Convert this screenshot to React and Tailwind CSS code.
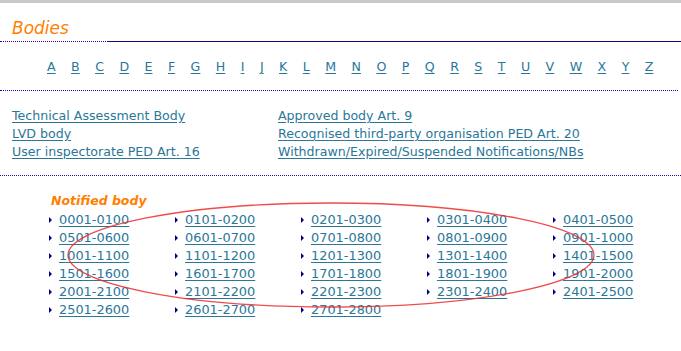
import React from "react";

const letters = "ABCDEFGHIJKLMNOPQRSTUVWXYZ".split("");

const bodyLinks = [
  "Technical Assessment Body",
  "Approved body Art. 9",
  "LVD body",
  "Recognised third-party organisation PED Art. 20",
  "User inspectorate PED Art. 16",
  "Withdrawn/Expired/Suspended Notifications/NBs",
];

const pad = (n) => String(n).padStart(4, "0");
const ranges = [];
for (let i = 0; i < 28; i++) {
  ranges.push(`${pad(i * 100 + 1)}-${pad(i * 100 + 100)}`);
}

const Dotted = ({ className = "" }) => (
  <div className={`border-t border-dotted border-[#2a00b0] ${className}`} />
);

export default function App() {
  return (
    <div className="relative w-[681px] h-[351px] overflow-hidden bg-white font-['DejaVu_Sans',Verdana,sans-serif] text-[12.6px] text-[#2a7799]">
      <div className="h-[3px] bg-[#c8c8c8]" />

      {/* heading */}
      <h1 className="mt-[15px] pl-[12px] text-[17px] leading-[20px] italic font-normal text-[#ff8000]">
        Bodies
      </h1>
      <div className="mt-[3px] flex">
        <Dotted className="w-[108px]" />
        <div className="flex-1 h-px bg-[#1c0090]" />
      </div>

      {/* alphabet */}
      <div className="mt-[16px] flex gap-[15.45px] pl-[47px] leading-[18px]">
        {letters.map((l) => (
          <a key={l} href="#" className="underline underline-offset-2">
            {l}
          </a>
        ))}
      </div>
      <Dotted className="mt-[14px] mr-[3px]" />

      {/* body types */}
      <div className="mt-[16px] pl-[12px] grid grid-cols-[266px_auto] leading-[18px]">
        {bodyLinks.map((t) => (
          <a key={t} href="#" className="underline underline-offset-2 justify-self-start">
            {t}
          </a>
        ))}
      </div>
      <Dotted className="mt-[14px]" />

      {/* notified body */}
      <h2 className="mt-[17px] pl-[51px] text-[12.5px] leading-[16px] italic font-bold text-[#ff8000]">
        Notified body
      </h2>
      <div className="mt-[2px] ml-[49px] grid grid-cols-[repeat(5,126px)] text-[12.9px] leading-[18px]">
        {ranges.map((r) => (
          <div key={r} className="flex items-center gap-[7px]">
            <span className="w-0 h-0 border-y-[3px] border-y-transparent border-l-[3px] border-l-[#00008b]" />
            <a href="#" className="underline underline-offset-2">
              {r}
            </a>
          </div>
        ))}
      </div>

      {/* red annotation ellipse */}
      <svg className="absolute left-0 top-0 pointer-events-none" width="681" height="351">
        <ellipse cx="331" cy="255" rx="263" ry="52" fill="none" stroke="#ee2a2a" strokeWidth="1.3" strokeOpacity="0.85" />
      </svg>
    </div>
  );
}
